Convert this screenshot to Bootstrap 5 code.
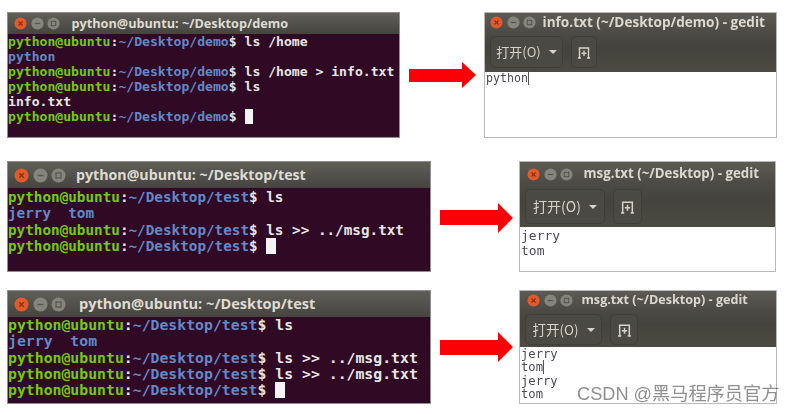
<!DOCTYPE html>
<html lang="zh">
<head>
<meta charset="utf-8">
<title>Shell redirection</title>
<link href="https://cdn.jsdelivr.net/npm/bootstrap@5.3.0/dist/css/bootstrap.min.css" rel="stylesheet">
<style>
html,body{background:#fff;margin:0;height:414px;overflow:hidden}
.canvas{width:795px;height:414px;display:flow-root}
.shot-row{padding-left:7px}
.r1{margin-top:12px;height:126px}
.r2{margin-top:23px;height:111px}
.r3{margin-top:18px;height:114px}
.soft{filter:blur(.6px)}
.term{border:1px solid #8f8f8f;background:#300a24;overflow:hidden;flex:none}
.r1 .term{width:393px}
.r2 .term,.r3 .term{width:424px}
.tbar{background:linear-gradient(#5f5e58,#45443e);color:#dfdbd2;font-family:"Open Sans",sans-serif;font-weight:700;white-space:nowrap}
.r1 .term .tbar{height:21px;font-size:12.7px;padding-left:6px}
.r2 .term .tbar{height:26px;font-size:14.2px;padding-left:6px}
.r3 .term .tbar{height:26px;font-size:14.6px;padding-left:6px}
.ctl{width:13px;height:13px;flex:none;margin-right:3.5px}
.r2 .term .ctl,.r3 .term .ctl{width:15px;height:15px}
.tt{margin-left:8px}
.r2 .term .tt{margin-left:6.500px}
.r3 .term .tt{margin-left:9.500px}
.tlines{font-family:"DejaVu Sans Mono",monospace;font-weight:700;color:#e6e6e6;white-space:pre}
.r1 .tlines{font-size:13.1px;line-height:15px;padding-top:0}
.r2 .tlines{font-size:14.3px;line-height:16.3px;padding-top:1px}
.r3 .tlines{font-size:14.8px;line-height:16.25px;padding-top:0}
.g{color:#73cb10}
.b{color:#6289c8}
.cur{display:inline-block;width:.68em;height:1.08em;background:#f4f4f4;vertical-align:-.2em}
.arrow-a{flex:none;display:block}
.r1 .arrow-a{margin:50px 8px 0 9px;width:67px;height:26px;align-self:flex-start}
.r2 .arrow-a,.r3 .arrow-a{margin:42px 6px 0 9px;width:73px;height:30px;align-self:flex-start}
.gedit{border:1px solid #b9b9b9;background:#fff;overflow:hidden;flex:none}
.r1 .gedit{width:293px}
.r2 .gedit{width:257px}
.r3 .gedit{width:258px}
.gtop{background:linear-gradient(#5c5b55 0,#4b4a44 34%,#45433d 60%,#4b4a43 100%);color:#dcd8cf;font-family:"Open Sans",sans-serif;font-weight:700;white-space:nowrap}
.r1 .gtop{height:59px}
.r2 .gtop{height:65px}
.r3 .gtop{height:56px}
.gtitle{height:19px;padding-left:5px}
.r2 .gtitle{height:24px;padding-left:7px}
.r3 .gtitle{height:19px;padding-left:7px}
.r1 .gtitle{font-size:13.6px}
.r2 .gtitle{font-size:13.3px}
.r3 .gtitle{font-size:12.6px}
.r1 .gtitle .tt{margin-left:3px}
.r2 .gtitle .tt{margin-left:7px}
.r3 .gtitle .tt{margin-left:5px}
.gtools{gap:8px;padding-left:5px}
.r1 .gtools{padding-top:4px}
.r2 .gtools{padding-top:3px}
.r3 .gtools{padding-top:4px}
.gbtn{border:1px solid #3f3e39;border-radius:5px;background:#4a4943;color:#d6d3cb;font-family:"Noto Sans CJK SC","Noto Sans",sans-serif;font-weight:400;font-size:13px}
.r2 .gbtn{font-size:14px}
.r3 .gbtn{font-size:13.5px}
.r1 .gbtn{height:32px}
.r2 .gbtn{height:35px}
.r3 .gbtn{height:31px}
.wide{width:73px}
.r2 .wide{width:80px}
.r3 .wide{width:77px}
.narrow{width:26px}
.r2 .narrow{width:29px}
.r3 .narrow{width:28px}
.caret-d{width:0;height:0;border-left:4px solid transparent;border-right:4px solid transparent;border-top:4px solid #d6d3cb;margin-left:8px}
.gtext{font-family:"DejaVu Sans Mono",monospace;color:#4c4a52;white-space:pre;padding-left:1px}
.r1 .gtext{font-size:11.6px;line-height:12px}
.r2 .gtext{font-size:13px;line-height:15px;padding-top:1px}
.r3 .gtext{font-size:12.2px;line-height:13.3px;padding-top:1px}
.bar-i{border-right:1px solid #555}
.wm{position:absolute;left:577px;top:384px;font-family:"Liberation Sans","Noto Sans CJK SC",sans-serif;font-size:18.2px;line-height:21px;color:rgba(90,90,90,.68);white-space:nowrap;filter:blur(.3px)}
</style>
</head>
<body>
<svg width="0" height="0" class="position-absolute" aria-hidden="true">
  <symbol id="c-x" viewBox="0 0 15 15"><circle cx="7.500" cy="7.500" r="7" fill="#e25a2a"/><path d="M5.200 5.200l4.600 4.600M9.800 5.200l-4.600 4.600" stroke="#8a2f10" stroke-width="1.300"/></symbol>
  <symbol id="c-m" viewBox="0 0 15 15"><circle cx="7.500" cy="7.500" r="7" fill="#85847d"/><path d="M4.500 7.500h6" stroke="#55544e" stroke-width="1.400"/></symbol>
  <symbol id="c-b" viewBox="0 0 15 15"><circle cx="7.500" cy="7.500" r="7" fill="#85847d"/><rect x="5" y="5" width="5" height="5" fill="none" stroke="#55544e" stroke-width="1.200"/></symbol>
  <symbol id="i-new" viewBox="0 0 14 13"><path d="M2.500 12V2H11.500V12M1 12H4M10 12H13M7 4.500V10M4.500 7.200H9.500" fill="none" stroke="#d6d3cb" stroke-width="1.400"/></symbol>
</svg>
<div class="canvas position-relative">

<div class="shot-row r1 d-flex soft">
  <div class="term">
    <div class="tbar d-flex align-items-center"><svg class="ctl"><use href="#c-x"/></svg><svg class="ctl"><use href="#c-m"/></svg><svg class="ctl"><use href="#c-b"/></svg><span class="tt">python@ubuntu: ~/Desktop/demo</span></div>
    <div class="tlines"><span class="g">python@ubuntu</span>:<span class="b">~/Desktop/demo</span>$ ls /home
<span class="b">python</span>
<span class="g">python@ubuntu</span>:<span class="b">~/Desktop/demo</span>$ ls /home &gt; info.txt
<span class="g">python@ubuntu</span>:<span class="b">~/Desktop/demo</span>$ ls
info.txt
<span class="g">python@ubuntu</span>:<span class="b">~/Desktop/demo</span>$ <span class="cur"></span></div>
  </div>
  <svg class="arrow-a" viewBox="0 0 67 26" aria-hidden="true"><polygon points="0,7 53,7 53,0 67,13 53,26 53,20 0,20" fill="#fb0007"/></svg>
  <div class="gedit">
    <div class="gtop">
      <div class="gtitle d-flex align-items-center"><svg class="ctl"><use href="#c-x"/></svg><svg class="ctl"><use href="#c-m"/></svg><svg class="ctl"><use href="#c-b"/></svg><span class="tt">info.txt (~/Desktop/demo) - gedit</span></div>
      <div class="gtools d-flex">
        <div class="gbtn wide d-flex align-items-center justify-content-center">打开(O)<span class="caret-d"></span></div>
        <div class="gbtn narrow d-flex align-items-center justify-content-center"><svg width="14" height="13"><use href="#i-new"/></svg></div>
      </div>
    </div>
    <div class="gtext">python<span class="bar-i"></span></div>
  </div>
</div>

<div class="shot-row r2 d-flex soft">
  <div class="term">
    <div class="tbar d-flex align-items-center"><svg class="ctl"><use href="#c-x"/></svg><svg class="ctl"><use href="#c-m"/></svg><svg class="ctl"><use href="#c-b"/></svg><span class="tt">python@ubuntu: ~/Desktop/test</span></div>
    <div class="tlines"><span class="g">python@ubuntu</span>:<span class="b">~/Desktop/test</span>$ ls
<span class="b">jerry  tom</span>
<span class="g">python@ubuntu</span>:<span class="b">~/Desktop/test</span>$ ls &gt;&gt; ../msg.txt
<span class="g">python@ubuntu</span>:<span class="b">~/Desktop/test</span>$ <span class="cur"></span></div>
  </div>
  <svg class="arrow-a" viewBox="0 0 73 30" aria-hidden="true"><polygon points="0,7 58,7 58,0 73,15 58,30 58,22 0,22" fill="#fb0007"/></svg>
  <div class="gedit">
    <div class="gtop">
      <div class="gtitle d-flex align-items-center"><svg class="ctl"><use href="#c-x"/></svg><svg class="ctl"><use href="#c-m"/></svg><svg class="ctl"><use href="#c-b"/></svg><span class="tt">msg.txt (~/Desktop) - gedit</span></div>
      <div class="gtools d-flex">
        <div class="gbtn wide d-flex align-items-center justify-content-center">打开(O)<span class="caret-d"></span></div>
        <div class="gbtn narrow d-flex align-items-center justify-content-center"><svg width="15" height="14"><use href="#i-new"/></svg></div>
      </div>
    </div>
    <div class="gtext">jerry
tom</div>
  </div>
</div>

<div class="shot-row r3 d-flex soft">
  <div class="term">
    <div class="tbar d-flex align-items-center"><svg class="ctl"><use href="#c-x"/></svg><svg class="ctl"><use href="#c-m"/></svg><svg class="ctl"><use href="#c-b"/></svg><span class="tt">python@ubuntu: ~/Desktop/test</span></div>
    <div class="tlines"><span class="g">python@ubuntu</span>:<span class="b">~/Desktop/test</span>$ ls
<span class="b">jerry  tom</span>
<span class="g">python@ubuntu</span>:<span class="b">~/Desktop/test</span>$ ls &gt;&gt; ../msg.txt
<span class="g">python@ubuntu</span>:<span class="b">~/Desktop/test</span>$ ls &gt;&gt; ../msg.txt
<span class="g">python@ubuntu</span>:<span class="b">~/Desktop/test</span>$ <span class="cur"></span></div>
  </div>
  <svg class="arrow-a" viewBox="0 0 73 30" aria-hidden="true"><polygon points="0,8 58,8 58,0 73,15 58,30 58,23 0,23" fill="#fb0007"/></svg>
  <div class="gedit">
    <div class="gtop">
      <div class="gtitle d-flex align-items-center"><svg class="ctl"><use href="#c-x"/></svg><svg class="ctl"><use href="#c-m"/></svg><svg class="ctl"><use href="#c-b"/></svg><span class="tt">msg.txt (~/Desktop) - gedit</span></div>
      <div class="gtools d-flex">
        <div class="gbtn wide d-flex align-items-center justify-content-center">打开(O)<span class="caret-d"></span></div>
        <div class="gbtn narrow d-flex align-items-center justify-content-center"><svg width="15" height="14"><use href="#i-new"/></svg></div>
      </div>
    </div>
    <div class="gtext">jerry
tom<span class="bar-i"></span>
jerry
tom</div>
  </div>
</div>

<div class="wm">CSDN @黑马程序员官方</div>
</div>
<script src="https://cdn.jsdelivr.net/npm/bootstrap@5.3.0/dist/js/bootstrap.bundle.min.js"></script>
</body>
</html>
